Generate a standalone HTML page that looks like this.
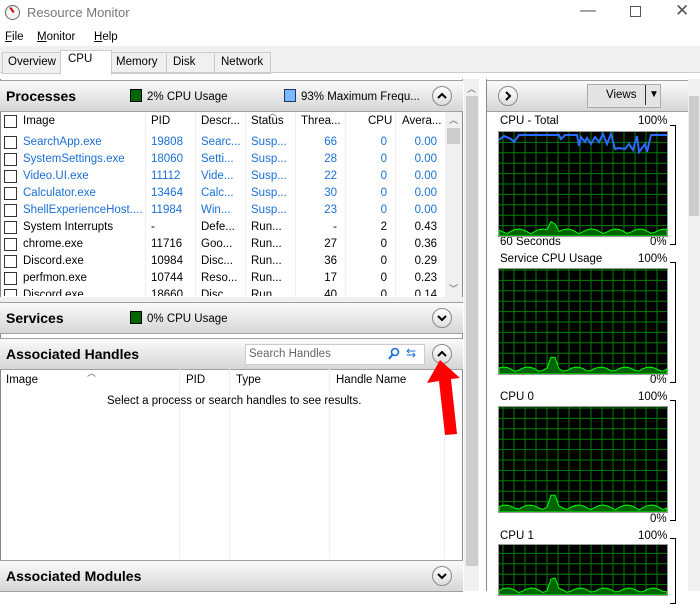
<!DOCTYPE html><html><head><style>
body{margin:0;width:700px;height:591px;overflow:hidden;background:#fff;font-family:"Liberation Sans",sans-serif;font-size:11.5px;color:#000;position:relative}
.a{position:absolute;white-space:nowrap}
.hdr{position:absolute;height:30px;background:linear-gradient(#fafafa,#d6d6d6);border-top:1px solid #a0a0a0;border-bottom:1px solid #a0a0a0}
.hdr b{position:absolute;left:6px;top:7px;font-size:14px}
.btn{position:absolute;width:18px;height:18px;border-radius:50%;border:1px solid #888;background:linear-gradient(#fff,#ddd)}
.btn svg{position:absolute;left:4px;top:5px}
.row{position:absolute;left:0;width:445px;height:17px}
.row span{position:absolute;top:2px}
.cb{position:absolute;left:4px;top:2px;width:11px;height:11px;border:1px solid #333;background:#fff}
.bl{color:#1a6fd6}
.g{position:absolute;left:498px;width:168px;background:#000;border:1px solid #999}
.sq{display:inline-block;width:10px;height:11px;vertical-align:-2px;margin-right:5px}
</style></head><body>
<div class="a" style="left:5px;top:5px;width:13px;height:13px;border-radius:50%;border:1px solid #666;background:#f4f4f4"></div>
<div class="a" style="left:11px;top:7px;width:2px;height:6px;background:#c00;transform:rotate(-35deg)"></div>
<div class="a" style="left:27px;top:5px;font-size:13px;color:#777">Resource Monitor</div>
<div class="a" style="left:580px;top:2px;font-size:16px;color:#555">—</div>
<div class="a" style="left:630px;top:6px;width:9px;height:9px;border:1px solid #555"></div>
<div class="a" style="left:675px;top:1px;font-size:17px;color:#555">✕</div>
<div class="a" style="left:5px;top:31px"><u>F</u>ile</div>
<div class="a" style="left:37px;top:31px"><u>M</u>onitor</div>
<div class="a" style="left:94px;top:31px"><u>H</u>elp</div>
<div class="a" style="left:0;top:46px;width:700px;height:26px;background:#f0f0f0;border-bottom:1px solid #ccc"></div>
<div class="a" style="left:2px;top:52px;width:58px;height:20px;border:1px solid #ccc;background:#f0f0f0"></div><div class="a" style="left:8px;top:56px">Overview</div>
<div class="a" style="left:60px;top:50px;width:50px;height:24px;border:1px solid #ccc;border-bottom:none;background:#fff"></div><div class="a" style="left:68px;top:53px">CPU</div>
<div class="a" style="left:111px;top:52px;width:54px;height:20px;border:1px solid #ccc"></div><div class="a" style="left:116px;top:56px">Memory</div>
<div class="a" style="left:166px;top:52px;width:47px;height:20px;border:1px solid #ccc"></div><div class="a" style="left:173px;top:56px">Disk</div>
<div class="a" style="left:214px;top:52px;width:55px;height:20px;border:1px solid #ccc"></div><div class="a" style="left:221px;top:56px">Network</div>
<div class="a" style="left:0;top:79px;width:463px;height:512px;border-left:1px solid #888;border-right:1px solid #888;box-sizing:border-box"></div>
<div class="hdr" style="left:0;top:80px;width:463px"><b>Processes</b>
<span class="a" style="left:130px;top:8px"><span class="sq" style="background:#060;border:1px solid #000"></span>2% CPU Usage</span>
<span class="a" style="left:284px;top:8px"><span class="sq" style="background:#7ab8ff;border:1px solid #236"></span>93% Maximum Frequ...</span>
<div class="btn" style="left:432px;top:5px"><svg width="10" height="8"><polyline points="1,6 5,2 9,6" fill="none" stroke="#000" stroke-width="2"/></svg></div></div>
<div class="row" style="top:113px"><div class="cb"></div><span style="left:23px">Image</span><span style="left:151px">PID</span><span style="left:201px">Descr...</span><span style="left:251px">Status</span><span style="left:301px">Threa...</span><span style="left:368px">CPU</span><span style="left:402px">Avera...</span></div>
<div class="a" style="left:268px;top:106px;font-size:9px;color:#666">︿</div>
<div id="rows"></div>
<div class="a" style="left:445px;top:112px;width:17px;height:185px;background:#f0f0f0"></div>
<div class="a" style="left:447px;top:128px;width:13px;height:16px;background:#cdcdcd"></div>
<div class="a" style="left:449px;top:113px;font-size:9px;color:#555">︿</div>
<div class="a" style="left:449px;top:282px;font-size:9px;color:#555">﹀</div>
<div class="hdr" style="left:0;top:302px;width:463px"><b>Services</b>
<span class="a" style="left:130px;top:8px"><span class="sq" style="background:#060;border:1px solid #000"></span>0% CPU Usage</span>
<div class="btn" style="left:432px;top:5px"><svg width="10" height="8"><polyline points="1,2 5,6 9,2" fill="none" stroke="#000" stroke-width="2"/></svg></div></div>
<div class="hdr" style="left:0;top:338px;width:463px"><b>Associated Handles</b>
<div class="a" style="left:245px;top:5px;width:178px;height:19px;background:#fff;border:1px solid #ccc"></div>
<span class="a" style="left:249px;top:9px;color:#666">Search Handles</span>
<svg class="a" style="left:388px;top:8px" width="12" height="13"><circle cx="7" cy="5" r="3.5" fill="none" stroke="#1a6fd6" stroke-width="1.6"/><line x1="4.5" y1="7.5" x2="1" y2="12" stroke="#1a6fd6" stroke-width="2"/></svg>
<span class="a" style="left:406px;top:7px;color:#1a6fd6;font-size:12px">⇆</span>
<div class="btn" style="left:432px;top:5px"><svg width="10" height="8"><polyline points="1,6 5,2 9,6" fill="none" stroke="#000" stroke-width="2"/></svg></div></div>
<div class="a" style="left:6px;top:374px">Image</div><div class="a" style="left:186px;top:374px">PID</div><div class="a" style="left:236px;top:374px">Type</div><div class="a" style="left:336px;top:374px">Handle Name</div>
<div class="a" style="left:87px;top:366px;font-size:9px;color:#666">︿</div>
<div class="a" style="left:179px;top:369px;width:1px;height:190px;background:#eef"></div>
<div class="a" style="left:229px;top:369px;width:1px;height:190px;background:#eef"></div>
<div class="a" style="left:329px;top:369px;width:1px;height:190px;background:#eef"></div>
<div class="a" style="left:444px;top:369px;width:1px;height:190px;background:#eef"></div>
<div class="a" style="left:107px;top:395px">Select a process or search handles to see results.</div>
<svg class="a" style="left:425px;top:360px" width="40" height="76"><polygon points="15,0 35,18 26,19 32,74 20,75 14,21 2,23" fill="#f00"/></svg>
<div class="hdr" style="left:0;top:560px;width:463px"><b>Associated Modules</b><div class="btn" style="left:432px;top:5px"><svg width="10" height="8"><polyline points="1,2 5,6 9,2" fill="none" stroke="#000" stroke-width="2"/></svg></div></div>
<div class="a" style="left:464px;top:79px;width:15px;height:512px;background:#f0f0f0"></div>
<div class="a" style="left:466px;top:96px;width:12px;height:470px;background:#cdcdcd"></div>
<div class="a" style="left:467px;top:82px;font-size:9px;color:#555">︿</div>
<div class="a" style="left:486px;top:79px;width:202px;height:512px;border-left:1px solid #888;border-right:1px solid #888"></div>
<div class="hdr" style="left:487px;top:80px;width:201px"><div class="btn" style="left:11px;top:5px"><svg width="10" height="10" style="left:5px;top:4px"><polyline points="2,1 6,5 2,9" fill="none" stroke="#000" stroke-width="2"/></svg></div>
<div class="a" style="left:100px;top:3px;width:72px;height:22px;background:#e4e4e4;border:1px solid #aaa"></div><span class="a" style="left:119px;top:8px">Views</span><span class="a" style="left:158px;top:4px;height:20px;border-left:1px solid #333;padding-left:3px;font-size:10px;line-height:20px">▼</span></div>
<div class="a" style="left:688px;top:79px;width:12px;height:512px;background:#f0f0f0"></div>
<div class="a" style="left:689px;top:96px;width:10px;height:120px;background:#cdcdcd"></div>
<div class="a" style="left:500px;top:115px">CPU - Total</div><div class="a" style="left:638px;top:115px">100%</div>
<div class="a" style="left:500px;top:236px">60 Seconds</div><div class="a" style="left:650px;top:236px">0%</div>
<div class="a" style="left:500px;top:253px">Service CPU Usage</div><div class="a" style="left:638px;top:253px">100%</div>
<div class="a" style="left:650px;top:374px">0%</div>
<div class="a" style="left:500px;top:391px">CPU 0</div><div class="a" style="left:638px;top:391px">100%</div>
<div class="a" style="left:650px;top:513px">0%</div>
<div class="a" style="left:500px;top:530px">CPU 1</div><div class="a" style="left:638px;top:530px">100%</div>
<div id="gr"></div>
<script>
var R=[["SearchApp.exe","19808","Searc...","Susp...","66","0","0.00",1],["SystemSettings.exe","18060","Setti...","Susp...","28","0","0.00",1],["Video.UI.exe","11112","Vide...","Susp...","22","0","0.00",1],["Calculator.exe","13464","Calc...","Susp...","30","0","0.00",1],["ShellExperienceHost....","11984","Win...","Susp...","23","0","0.00",1],["System Interrupts","-","Defe...","Run...","-","2","0.43"],["chrome.exe","11716","Goo...","Run...","27","0","0.36"],["Discord.exe","10984","Disc...","Run...","36","0","0.29"],["perfmon.exe","10744","Reso...","Run...","17","0","0.23"],["Discord.exe","18660","Disc...","Run...","40","0","0.14"]];
var h="";R.forEach(function(r,i){var c=r[7]?' class="bl"':'';var t=134+i*17;h+='<div class="row"'+' style="top:'+t+'px;'+(i==9?'height:163px;clip-path:inset(0 0 154px 0)':'')+'"><div class="cb"></div><span'+c+' style="left:23px">'+r[0]+'</span><span'+c+' style="left:151px">'+r[1]+'</span><span'+c+' style="left:201px">'+r[2]+'</span><span'+c+' style="left:251px">'+r[3]+'</span><span'+c+' style="right:108px">'+r[4]+'</span><span'+c+' style="right:58px">'+r[5]+'</span><span'+c+' style="right:8px">'+r[6]+'</span></div>';});
h+='<div class="a" style="left:0;top:297px;width:463px;height:5px;background:#f0f0f0"></div>';
for(var x of [145,195,245,295,345,395])h+='<div class="a" style="left:'+x+'px;top:112px;width:1px;height:185px;background:#eef0ff"></div>';
document.getElementById("rows").innerHTML=h;
var g="";[[131,104,1],[268,105,0],[406,105,0],[544,50,0]].forEach(function(a){var y=a[0],H=a[1];var s='<svg class="g" style="top:'+y+'px;height:'+H+'px" width="168" height="'+H+'">';for(var i=4;i<168;i+=11)s+='<line x1="'+i+'" y1="0" x2="'+i+'" y2="'+H+'" stroke="#008000"/>';for(var j=H;j>0;j-=10.4)s+='<line x1="0" y1="'+j+'" x2="168" y2="'+j+'" stroke="#008000"/>';
var pts="0,"+H;for(var k=0;k<=168;k+=4){var v=H-2-(Math.abs(Math.sin(k*1.7+y))*5)-(k>50&&k<60?10:0);pts+=" "+k+","+v.toFixed(1);}pts+=" 168,"+H;s+='<polygon points="'+pts+'" fill="#006400" stroke="#0f0"/>';
if(a[2])s+='<polyline points="0,8 5,4 12,7 15,10 20,3 60,3 62,7 66,3 78,3 80,14 82,5 86,10 88,6 92,12 96,5 100,10 104,2 108,12 112,2 116,17 120,16 126,17 130,12 134,18 138,4 140,20 146,12 148,20 152,3 168,3" fill="none" stroke="#2a6cff" stroke-width="2"/>';
s+='</svg><div class="a" style="left:670px;top:'+(y-6)+'px;width:5px;height:'+(H+14)+'px;border:1px solid #000;border-left:none"></div>';g+=s;});
document.getElementById("gr").innerHTML=g;
</script>
</body></html>
